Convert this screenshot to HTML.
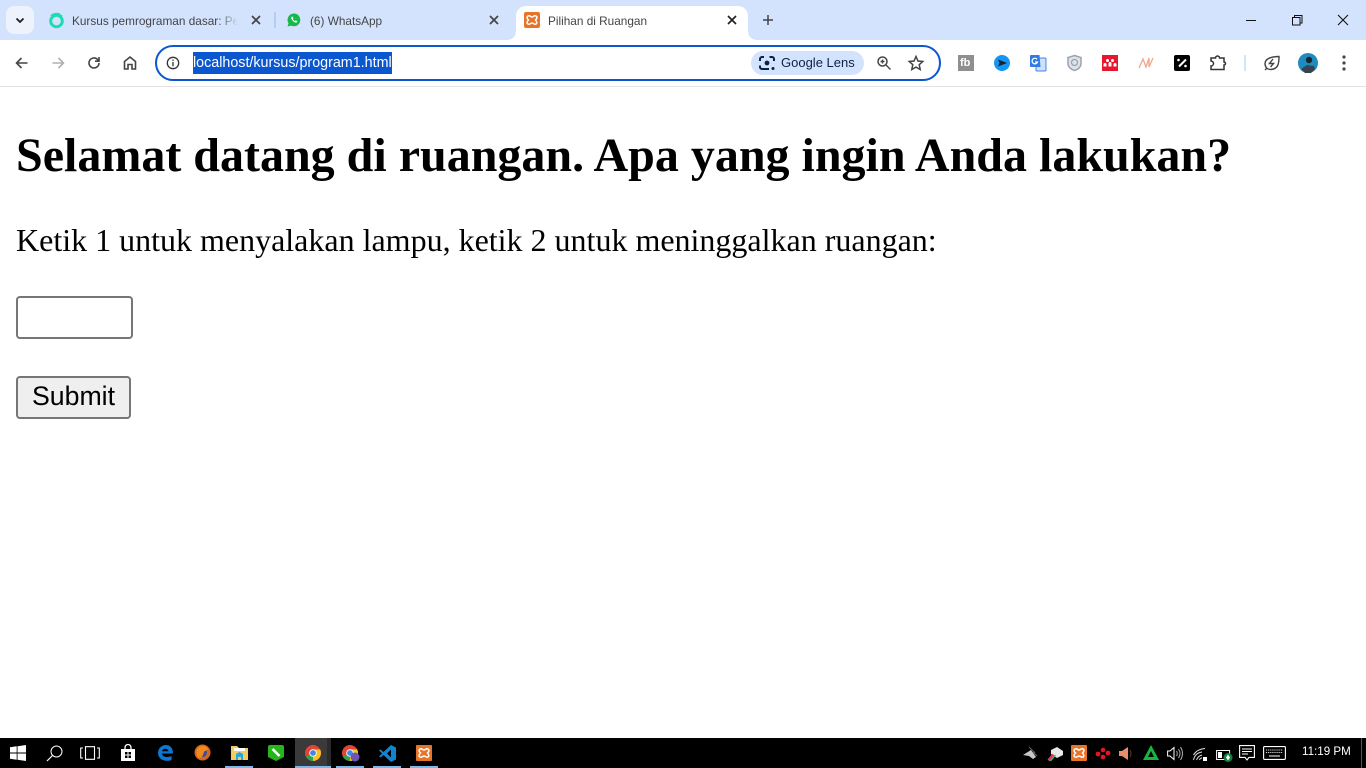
<!DOCTYPE html>
<html><head><meta charset="utf-8"><title>Pilihan di Ruangan</title>
<style>
html,body{margin:0;padding:0;width:1366px;height:768px;overflow:hidden;background:#fff}
body{position:relative;font-family:"Liberation Sans",sans-serif}
.a{position:absolute}
.t{position:absolute;white-space:nowrap;font-size:11.8px;line-height:16px;color:#444}
svg{position:absolute;overflow:visible}
h1{position:absolute;left:16px;top:128px;margin:0;font:bold 48px/56px "Liberation Serif",serif;color:#000;white-space:nowrap}
p{position:absolute;left:16px;top:222px;margin:0;font:32px/37px "Liberation Serif",serif;color:#000;white-space:nowrap}
</style></head><body>
<div class="a" style="left:0;top:0;width:1366px;height:40px;background:#d3e3fd"></div>
<div class="a" style="left:0;top:40px;width:1366px;height:46px;background:#fff;border-radius:8px 8px 0 0"></div>
<div class="a" style="left:0;top:86px;width:1366px;height:1px;background:#e3e3e3"></div>
<!-- tab strip -->
<div class="a" style="left:6px;top:6px;width:28px;height:28px;border-radius:8px;background:#edf2fd"></div>
<svg style="left:0;top:0" width="40" height="40"><path d="M16.500 18.500l3.500 3.500 3.500-3.500" fill="none" stroke="#1f1f1f" stroke-width="1.800"/></svg>
<svg style="left:48px;top:12px" width="16" height="16"><circle cx="8.500" cy="9" r="5.800" fill="none" stroke="#1fdcb0" stroke-width="3"/><path d="M2 4Q5 0 11 1l4 3-6-1z" fill="#1fdcb0"/></svg>
<div class="t" style="left:72px;top:13px;width:166px;overflow:hidden;-webkit-mask-image:linear-gradient(90deg,#000 88%,transparent)">Kursus pemrograman dasar: Pel</div>
<svg style="left:251px;top:15px" width="10" height="10"><path d="M1 1l8 8M9 1l-8 8" stroke="#444" stroke-width="1.700"/></svg>
<div class="a" style="left:274px;top:12px;width:2px;height:16px;background:#b4cdf5"></div>
<svg style="left:287px;top:13px" width="14" height="14"><path d="M7 .5a6.400 6.400 0 0 0-5.500 9.700L.6 13.500l3.400-.9A6.400 6.400 0 1 0 7 .5z" fill="#17b84a"/><path d="M4.600 3.800c-1 1 .1 3 1.500 4.300 1.400 1.300 3.100 2 4 1 .5-.8-.2-1.200-1.200-1.700-.5 0-.6.700-1 .6-.9-.4-1.500-1-2-1.900 0-.4.600-.5.600-1-.4-1-.8-1.700-1.900-1.300z" fill="#fff"/></svg>
<div class="t" style="left:310px;top:13px">(6) WhatsApp</div>
<svg style="left:489px;top:15px" width="10" height="10"><path d="M1 1l8 8M9 1l-8 8" stroke="#444" stroke-width="1.700"/></svg>
<div class="a" style="left:508px;top:32px;width:8px;height:8px;background:radial-gradient(circle at 0 0,#d3e3fd 7.500px,#fff 8px)"></div>
<div class="a" style="left:748px;top:32px;width:8px;height:8px;background:radial-gradient(circle at 100% 0,#d3e3fd 7.500px,#fff 8px)"></div>
<div class="a" style="left:516px;top:6px;width:232px;height:36px;background:#fff;border-radius:10px 10px 0 0"></div>
<svg style="left:524px;top:12px" width="16" height="16"><rect width="16" height="16" rx="2" fill="#e8742a"/><path d="M4 4c2-1 2.500 1 4 1s2-2 4-1 .5 3-.5 4c1 1 2 3 .5 4s-2.500-1-4-1-2 2-4 1-.5-3 .5-4C3 7 2.500 5 4 4z" fill="none" stroke="#fff" stroke-width="1.500"/></svg>
<div class="t" style="left:548px;top:13px">Pilihan di Ruangan</div>
<svg style="left:727px;top:15px" width="10" height="10"><path d="M1 1l8 8M9 1l-8 8" stroke="#222" stroke-width="1.700"/></svg>
<svg style="left:762px;top:14px" width="12" height="12"><path d="M6 1v10M1 6h10" stroke="#444" stroke-width="1.500"/></svg>
<!-- window controls -->
<div class="a" style="left:1246px;top:20px;width:10px;height:1px;background:#111"></div>
<svg style="left:1292px;top:15px" width="11" height="11"><path d="M.5 2.500h7.500v7.500H.5zM2.500 2.500V.5H10V8H8" fill="none" stroke="#111"/></svg>
<svg style="left:1338px;top:15px" width="10" height="10"><path d="M0 0l10 10M10 0L0 10" stroke="#111" stroke-width="1.100"/></svg>
<!-- toolbar -->
<svg style="left:14px;top:55px" width="16" height="16"><path d="M13.500 8H2.500M7.500 3l-5 5 5 5" fill="none" stroke="#444" stroke-width="1.600"/></svg>
<svg style="left:50px;top:55px" width="16" height="16"><path d="M2.500 8h11M8.500 3l5 5-5 5" fill="none" stroke="#b0b0b0" stroke-width="1.600"/></svg>
<svg style="left:86px;top:55px" width="16" height="16"><path d="M13 8a5 5 0 1 1-1.500-3.600L13 6M13 2v4.200H9" fill="none" stroke="#444" stroke-width="1.600"/></svg>
<svg style="left:122px;top:55px" width="16" height="16"><path d="M2.500 14V6.500L8 2l5.500 4.500V14H10V9.500H6V14z" fill="none" stroke="#444" stroke-width="1.600"/></svg>
<div class="a" style="left:155px;top:45px;width:782px;height:32px;border:2px solid #0b57d0;border-radius:18px;background:#fff"></div>
<svg style="left:166px;top:56px" width="14" height="14"><circle cx="7" cy="7" r="5.700" fill="none" stroke="#333" stroke-width="1.300"/><path d="M7 6v4.200M7 3.500v1.400" stroke="#333" stroke-width="1.300"/></svg>
<div class="a" style="left:193px;top:52px;width:199px;height:22px;background:#0b57d0"></div>
<div class="t" style="left:193px;top:55px;font-size:14.300px;color:#fff">localhost/kursus/program1.html</div>
<div class="a" style="left:751px;top:51px;width:113px;height:24px;border-radius:12px;background:#d3e3fd"></div>
<svg style="left:759px;top:55px" width="16" height="16"><path d="M1 6V4a2 2 0 0 1 2-2h2M10.500 2H13a2 2 0 0 1 2 2v2M1 10.500V12a2 2 0 0 0 2 2h7" fill="none" stroke="#0c2245" stroke-width="2"/><circle cx="8" cy="8" r="2.400" fill="#0c2245"/><circle cx="14" cy="13.500" r="1.500" fill="#0c2245"/></svg>
<div class="t" style="left:781px;top:55px;font-size:13px;color:#0c2245">Google Lens</div>
<svg style="left:876px;top:55px" width="16" height="16"><circle cx="6.500" cy="6.500" r="4.500" fill="none" stroke="#444" stroke-width="1.500"/><path d="M10 10l4.500 4.500M4.500 6.500h4M6.500 4.500v4" stroke="#444" stroke-width="1.400"/></svg>
<svg style="left:908px;top:55px" width="16" height="16"><path d="M8 1.500l2 4.500 4.800.5-3.600 3.200 1 4.800L8 12.100l-4.200 2.400 1-4.800L1.200 6.500 6 6z" fill="none" stroke="#444" stroke-width="1.500"/></svg>
<!-- extensions -->
<div class="a" style="left:958px;top:55px;width:16px;height:16px;background:#8f8f8f"></div>
<div class="t" style="left:960px;top:56px;font-size:11px;line-height:14px;font-weight:bold;color:#fff">fb</div>
<svg style="left:994px;top:55px" width="16" height="16"><circle cx="8" cy="8" r="8" fill="#1496f3"/><path d="M4 4.500L13 8l-9 3.500 1.500-3.500z" fill="#16212b"/></svg>
<svg style="left:1030px;top:55px" width="16" height="16"><rect x="6" y="3" width="10" height="13" rx="1" fill="#cfe0f7" stroke="#4285f4"/><path d="M1 0h8.500l1 12H1a1 1 0 0 1-1-1V1a1 1 0 0 1 1-1z" fill="#2f7be3"/><path d="M7 4.200A2.800 2.800 0 1 0 7.500 7H5" fill="none" stroke="#fff" stroke-width="1.300"/></svg>
<svg style="left:1067px;top:55px" width="15" height="16"><path d="M7.500.5L14 2.500v6c0 3.500-3 6-6.500 7C4 14.500 1 12 1 8.500v-6z" fill="#dfe3e9" stroke="#9aa3ae" stroke-width="1.500"/><circle cx="7.500" cy="7.500" r="3" fill="none" stroke="#9aa3ae" stroke-width="1.300"/></svg>
<div class="a" style="left:1102px;top:55px;width:16px;height:16px;background:#e7182e"></div>
<svg style="left:1102px;top:55px" width="16" height="16" fill="#fff"><circle cx="5.500" cy="5.500" r="1.500"/><circle cx="10.500" cy="5.500" r="1.500"/><circle cx="3" cy="9.500" r="1.500"/><circle cx="8" cy="8.500" r="1.500"/><circle cx="13" cy="9.500" r="1.500"/><path d="M1.500 10h3v1.500h-3zM6.500 9h3v2.500h-3zM11.500 10h3v1.500h-3z"/></svg>
<svg style="left:1138px;top:55px" width="16" height="16"><path d="M1 13L5 4l3 8 3-9 0 9L15 3" fill="none" stroke="#f2a68e" stroke-width="1.300"/></svg>
<svg style="left:1174px;top:55px" width="16" height="16"><rect width="16" height="16" rx="2" fill="#000"/><path d="M5 11.500l7-7" stroke="#fff" stroke-width="2"/><circle cx="4.500" cy="5" r="1.300" fill="#fff"/><circle cx="11.500" cy="11" r="1.300" fill="#fff"/></svg>
<svg style="left:1210px;top:55px" width="16" height="16"><path d="M1 3h4.500a2 2 0 0 1 4 0H14v4a1.500 1.500 0 0 1 0 3v4.500H1V11a2.500 2.500 0 0 0 0-5z" fill="none" stroke="#333" stroke-width="1.500"/></svg>
<div class="a" style="left:1244px;top:55px;width:2px;height:16px;background:#d3e3fd"></div>
<svg style="left:1264px;top:55px" width="16" height="16"><path d="M15 1.500C15 9 14 14 7 14.500 3 14.500 1 12 1 8.500 1 4 7 1.500 15 1.500zM9 4L5.500 8.500h4L6.500 12M1 15l2-2" fill="none" stroke="#444" stroke-width="1.400"/></svg>
<svg style="left:1298px;top:53px" width="20" height="20"><circle cx="10" cy="10" r="10" fill="#1f8cc0"/><path d="M3 16l6-4 7 1 1 3-4 4H7z" fill="#38434f"/><circle cx="11" cy="7" r="3.200" fill="#1b2530"/></svg>
<svg style="left:1342px;top:54px" width="4" height="18"><circle cx="2" cy="3" r="1.600" fill="#444"/><circle cx="2" cy="9" r="1.600" fill="#444"/><circle cx="2" cy="15" r="1.600" fill="#444"/></svg>
<!-- page -->
<h1>Selamat datang di ruangan. Apa yang ingin Anda lakukan?</h1>
<p>Ketik 1 untuk menyalakan lampu, ketik 2 untuk meninggalkan ruangan:</p>
<div class="a" style="left:16px;top:296px;width:113px;height:39px;border:2px solid #767676;border-radius:4px;background:#fff"></div>
<div class="a" style="left:16px;top:376px;width:111px;height:39px;border:2px solid #767676;border-radius:4px;background:#efefef;text-align:center;font-size:26.700px;line-height:37px;color:#000">Submit</div>
<!-- taskbar -->
<div class="a" style="left:0;top:738px;width:1366px;height:30px;background:#000"></div>
<svg style="left:10px;top:745px" width="16" height="16"><path d="M0 2.300L6.700 1.300V7.500H0zM7.500 1.200L16 0V7.500H7.500zM0 8.500H6.700V14.700L0 13.700zM7.500 8.500H16V16L7.500 14.800z" fill="#fff"/></svg>
<svg style="left:46px;top:745px" width="17" height="17"><circle cx="10.500" cy="6.500" r="5.500" fill="none" stroke="#fff" stroke-width="1"/><path d="M6.500 10.500L1 16" stroke="#fff" stroke-width="1.200"/></svg>
<svg style="left:80px;top:746px" width="20" height="14"><path d="M5.500.7h9v12.600h-9zM3 2H.7v10H3M17 2h2.300v10H17" fill="none" stroke="#fff" stroke-width="1.100"/></svg>
<svg style="left:121px;top:745px" width="14" height="16"><path d="M0 4h14v12H0z" fill="#fff"/><path d="M4 5V2.500a3 3 0 0 1 6 0V5" fill="none" stroke="#fff" stroke-width="1.300"/><path d="M4 7h2.500v2.500H4zM7.500 7H10v2.500H7.500zM4 10.500h2.500V13H4zM7.500 10.500H10V13H7.500z" fill="#000"/></svg>
<svg style="left:157px;top:745px" width="16" height="16"><path d="M1 8C1 3 5 0 9 0s7 3 7 8.500H5c.3 3.500 5 4.500 9.500 2.500v4c-5 2-13.500.5-13.500-7zM5 6.200h6.500C11 3 6 3 5 6.200z" fill="#0a78d4"/></svg>
<svg style="left:194px;top:744px" width="17" height="17"><circle cx="8.500" cy="8.500" r="8" fill="#d9651c"/><circle cx="8.500" cy="8.500" r="4.500" fill="#3d4f9c"/><path d="M3 5c3-4 9-4 11 0-1 2-3 1-4 3s-1 6-5 6C2 12 2 8 3 5z" fill="#f08a1d"/></svg>
<svg style="left:231px;top:745px" width="17" height="15"><path d="M0 1h6l2 2h9v12H0z" fill="#f4cb5f"/><path d="M3 3h11v3H3z" fill="#fff"/><path d="M5 15V9l3.500-2 3.500 2v6H10v-3H7v3z" fill="#27a5dc"/></svg>
<div class="a" style="left:225px;top:766px;width:28px;height:2px;background:#76b9ed"></div>
<svg style="left:268px;top:745px" width="16" height="16"><path d="M2 0h12a2 2 0 0 1 2 2v10l-8 4-8-4V2a2 2 0 0 1 2-2z" fill="#25b51c"/><path d="M4.500 4l7 7" stroke="#fff" stroke-width="2.600"/></svg>
<div class="a" style="left:295px;top:738px;width:36px;height:30px;background:#3a3a3a"></div>
<div class="a" style="left:327px;top:738px;width:4px;height:30px;background:#2a2a2a"></div>
<div class="a" style="left:295px;top:766px;width:36px;height:2px;background:#76b9ed"></div>
<svg style="left:305px;top:745px" width="16" height="16"><circle cx="8" cy="8" r="8" fill="#e24536"/><path d="M8 8L.9 11.500A8 8 0 0 0 9 15.900z" fill="#2fa44f"/><path d="M8 4.500h7.200A8 8 0 0 1 8 16z" fill="#f9c31c"/><circle cx="8" cy="8" r="3.800" fill="#fff"/><circle cx="8" cy="8" r="2.900" fill="#3f86ed"/></svg>
<svg style="left:342px;top:745px" width="18" height="17"><circle cx="8" cy="8" r="8" fill="#e24536"/><path d="M8 8L.9 11.500A8 8 0 0 0 9 15.900z" fill="#2fa44f"/><path d="M8 4.500h7.200A8 8 0 0 1 8 16z" fill="#f9c31c"/><circle cx="8" cy="8" r="3.800" fill="#fff"/><circle cx="8" cy="8" r="2.900" fill="#3f86ed"/><circle cx="13" cy="12" r="4.500" fill="#6e55b5"/></svg>
<div class="a" style="left:336px;top:766px;width:28px;height:2px;background:#76b9ed"></div>
<svg style="left:379px;top:745px" width="17" height="17"><path d="M12 0l5 2.500v12L12 17 4.500 10 1.500 12.500 0 11.500 3 8.500 0 5.500 1.500 4.500 4.500 7zM12 4.500L8 8.500l4 4z" fill="#0f85d1"/></svg>
<div class="a" style="left:373px;top:766px;width:28px;height:2px;background:#76b9ed"></div>
<svg style="left:416px;top:745px" width="16" height="16"><rect width="16" height="16" rx="1" fill="#e8742a"/><path d="M4 4c2-1 2.500 1 4 1s2-2 4-1 .5 3-.5 4c1 1 2 3 .5 4s-2.500-1-4-1-2 2-4 1-.5-3 .5-4C3 7 2.500 5 4 4z" fill="none" stroke="#fff" stroke-width="1.500"/></svg>
<div class="a" style="left:410px;top:766px;width:28px;height:2px;background:#76b9ed"></div>
<!-- tray -->
<svg style="left:1023px;top:746px" width="15" height="14"><path d="M0 9l8-5 5 7-3 2-4-3z" fill="#c7c7c7"/><path d="M6 1l6 6M10 6l4 4" stroke="#666"/></svg>
<svg style="left:1047px;top:746px" width="16" height="16"><path d="M4 4l6-3 6 4v4l-6 3-6-4z" fill="#e8e8e8"/><path d="M1 14l5-6M2 15l5-6" stroke="#ef3b7d" stroke-width="1.300"/><path d="M3.500 15l5-6" stroke="#3fc54d" stroke-width="1.300"/></svg>
<svg style="left:1071px;top:745px" width="16" height="16"><rect width="16" height="16" rx="1" fill="#e8742a"/><path d="M4 4c2-1 2.500 1 4 1s2-2 4-1 .5 3-.5 4c1 1 2 3 .5 4s-2.500-1-4-1-2 2-4 1-.5-3 .5-4C3 7 2.500 5 4 4z" fill="none" stroke="#fff" stroke-width="1.500"/></svg>
<svg style="left:1095px;top:747px" width="16" height="13" fill="#e3161f"><circle cx="8" cy="3" r="2.300"/><circle cx="3" cy="7" r="2.400"/><circle cx="8" cy="10" r="2.400"/><circle cx="13" cy="6" r="2.400"/></svg>
<svg style="left:1119px;top:746px" width="15" height="15"><path d="M0 5h3l6-4v13L3 10H0z" fill="#e98d6e"/><path d="M11 4q2 3.500 0 7" fill="none" stroke="#52301f" stroke-width="1.200"/></svg>
<svg style="left:1143px;top:745px" width="16" height="16"><path d="M8 0l8 15H0zM8 6l-3 6h6z" fill="#16b83c" fill-rule="evenodd"/></svg>
<svg style="left:1167px;top:746px" width="16" height="15"><path d="M.6 5H3l4-3.500v12L3 10H.6z" fill="none" stroke="#fff"/><path d="M9.500 5q1.500 2.500 0 5M11.500 3q3 4.500 0 9M13.500 1q4 6.500 0 13" fill="none" stroke="#aaa"/></svg>
<svg style="left:1193px;top:747px" width="15" height="14"><path d="M.5 13Q2 6 9 5M3.500 13Q5 9 9 8M6.500 13Q7 11 9 11M.5 8Q4 2 12 1.500" fill="none" stroke="#ddd"/><rect x="10" y="10" width="4" height="4" fill="#fff"/></svg>
<svg style="left:1216px;top:748px" width="17" height="14"><path d="M.6 2.500h13v9H.6z" fill="none" stroke="#fff"/><rect x="2" y="4" width="4" height="6" fill="#fff"/><circle cx="12" cy="9.500" r="4.500" fill="#15803d"/><path d="M12 6.500l2 3-2 3-2-3z" fill="#fff"/></svg>
<svg style="left:1239px;top:745px" width="16" height="17"><path d="M.6.6h14.800v11.800H10L8 15l-2-2.600H.6z" fill="none" stroke="#fff" stroke-width="1.100"/><path d="M3 4h10M3 6.500h10M3 9h6" stroke="#fff"/></svg>
<svg style="left:1263px;top:746px" width="23" height="14"><rect x=".6" y=".6" width="21.800" height="12.800" rx="1" fill="none" stroke="#fff" stroke-width="1.100"/><path d="M3 4h17M3 6.500h17" stroke="#ddd" stroke-dasharray="1.200 .9"/><path d="M6 10h11" stroke="#fff"/></svg>
<div class="t" style="left:1302px;top:744px;color:#fff;font-size:11.600px">11:19 PM</div>
<div class="a" style="left:1361px;top:738px;width:1px;height:30px;background:#555"></div>
</body></html>
